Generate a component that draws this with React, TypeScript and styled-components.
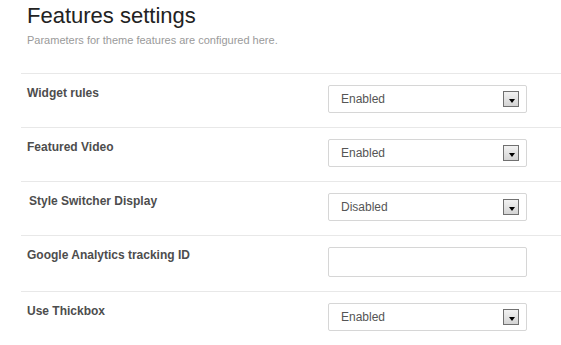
import React from "react";
import styled, { createGlobalStyle } from "styled-components";

const Global = createGlobalStyle`
  html, body { margin: 0; padding: 0; background: #ffffff; }
  body { font-family: "Liberation Sans", Arial, sans-serif; overflow: hidden; }
`;

const Page = styled.div`
  width: 561px;
  height: 345px;
  box-sizing: border-box;
  padding: 3px 0 0 21px;
  overflow: hidden;
`;

const Header = styled.header`
  padding-left: 6px;
`;

const Title = styled.h2`
  margin: 0;
  font-size: 22px;
  line-height: 26px;
  font-weight: normal;
  color: #222222;
`;

const Subtitle = styled.p`
  margin: 5px 0 0;
  font-size: 11px;
  line-height: 13px;
  color: #9a9a9a;
`;

const List = styled.div`
  margin-top: 26px;
`;

const Row = styled.div`
  display: grid;
  grid-template-columns: 301px 199px;
  align-items: start;
  border-top: 1px solid #e8e8e8;
  padding: 11px 0 14px 6px;
`;

const Label = styled.div<{ $indent?: number }>`
  font-size: 12px;
  line-height: 14px;
  font-weight: bold;
  color: #4d4d4d;
  padding-top: 1px;
  padding-left: ${(p) => p.$indent ?? 0}px;
`;

const SelectBox = styled.div`
  box-sizing: border-box;
  height: 28px;
  border: 1px solid #d6d6d6;
  border-radius: 2px;
  display: flex;
  align-items: center;
  justify-content: space-between;
  padding: 0 7px 0 12px;
  font-size: 12px;
  color: #555555;
  background: #ffffff;
`;

const ArrowButton = styled.span`
  box-sizing: border-box;
  width: 16px;
  height: 16px;
  border: 1px solid #707070;
  background: linear-gradient(#f2f2f2, #d4d4d4);
  display: flex;
  align-items: center;
  justify-content: center;
  padding: 3px 0 0 1px;
`;

const Triangle = styled.span`
  width: 0;
  height: 0;
  border-left: 3.5px solid transparent;
  border-right: 3.5px solid transparent;
  border-top: 4px solid #000000;
`;

const TextInput = styled.input`
  box-sizing: border-box;
  width: 199px;
  height: 30px;
  border: 1px solid #d6d6d6;
  border-radius: 2px;
  padding: 0 12px;
  font-family: "Liberation Sans", Arial, sans-serif;
  font-size: 12px;
  color: #555555;
  outline: none;
  background: #ffffff;
`;

type Setting =
  | { label: string; type: "select"; value: string; indent?: number }
  | { label: string; type: "text"; indent?: number };

const settings: Setting[] = [
  { label: "Widget rules", type: "select", value: "Enabled" },
  { label: "Featured Video", type: "select", value: "Enabled" },
  { label: "Style Switcher Display", type: "select", value: "Disabled", indent: 2 },
  { label: "Google Analytics tracking ID", type: "text" },
  { label: "Use Thickbox", type: "select", value: "Enabled" },
];

export default function App() {
  return (
    <>
      <Global />
      <Page>
        <Header>
          <Title>Features settings</Title>
          <Subtitle>Parameters for theme features are configured here.</Subtitle>
        </Header>
        <List>
          {settings.map((s) => (
            <Row key={s.label}>
              <Label $indent={s.indent}>{s.label}</Label>
              {s.type === "select" ? (
                <SelectBox>
                  <span>{s.value}</span>
                  <ArrowButton>
                    <Triangle />
                  </ArrowButton>
                </SelectBox>
              ) : (
                <TextInput type="text" defaultValue="" />
              )}
            </Row>
          ))}
        </List>
      </Page>
    </>
  );
}
